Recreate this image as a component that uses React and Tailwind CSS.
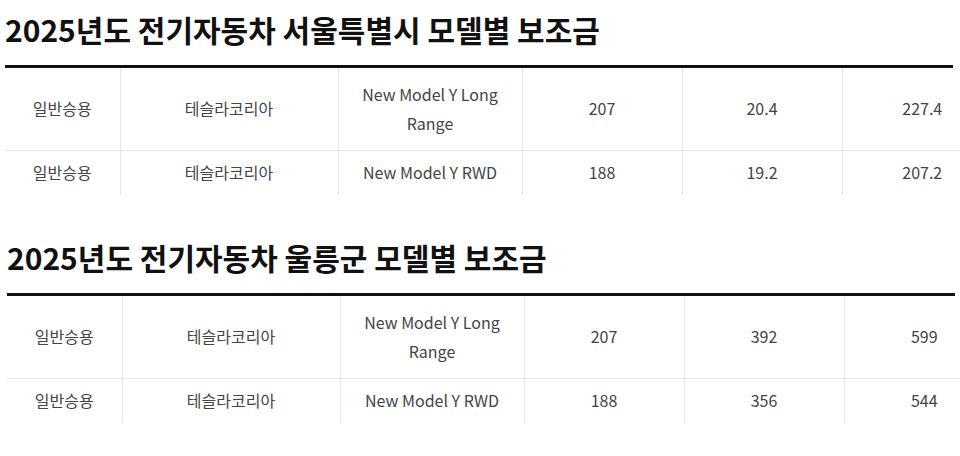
import React from 'react'

const seoul = [
  ['일반승용', '테슬라코리아', 'New Model Y Long Range', '207', '20.4', '227.4'],
  ['일반승용', '테슬라코리아', 'New Model Y RWD', '188', '19.2', '207.2'],
]

const ulleung = [
  ['일반승용', '테슬라코리아', 'New Model Y Long Range', '207', '392', '599'],
  ['일반승용', '테슬라코리아', 'New Model Y RWD', '188', '356', '544'],
]

function SubsidyTable({ title, rows }) {
  return (
    <section>
      <h2 className="text-[30px] font-bold leading-[40px] text-[#111]">{title}</h2>
      <div className="mt-[16px] h-[3px] w-[948px] bg-[#111]" />
      <table className="w-[997px] table-fixed border-collapse text-[16px] leading-[29px] text-[#444]">
        <colgroup>
          <col className="w-[115px]" />
          <col className="w-[218px]" />
          <col className="w-[184px]" />
          <col className="w-[160px]" />
          <col className="w-[160px]" />
          <col className="w-[160px]" />
        </colgroup>
        <tbody>
          {rows.map((row, i) => (
            <tr key={i} className={i < rows.length - 1 ? 'border-b border-[#e6e6e6]' : ''}>
              {row.map((cell, j) => (
                <td
                  key={j}
                  className={`px-[10px] text-center align-middle ${i === 0 ? 'h-[82px]' : 'h-[45px]'} ${j > 0 ? 'border-l border-[#e6e6e6]' : ''}`}
                >
                  {cell}
                </td>
              ))}
            </tr>
          ))}
        </tbody>
      </table>
    </section>
  )
}

export default function App() {
  return (
    <div className="h-[456px] w-[960px] overflow-hidden bg-white pl-[5px] pt-[9px] font-['Noto_Sans_CJK_KR','Noto_Sans',sans-serif]">
      <SubsidyTable title="2025년도 전기자동차 서울특별시 모델별 보조금" rows={seoul} />
      <div className="h-[42px]" />
      <div className="pl-[2px]">
        <SubsidyTable title="2025년도 전기자동차 울릉군 모델별 보조금" rows={ulleung} />
      </div>
    </div>
  )
}
